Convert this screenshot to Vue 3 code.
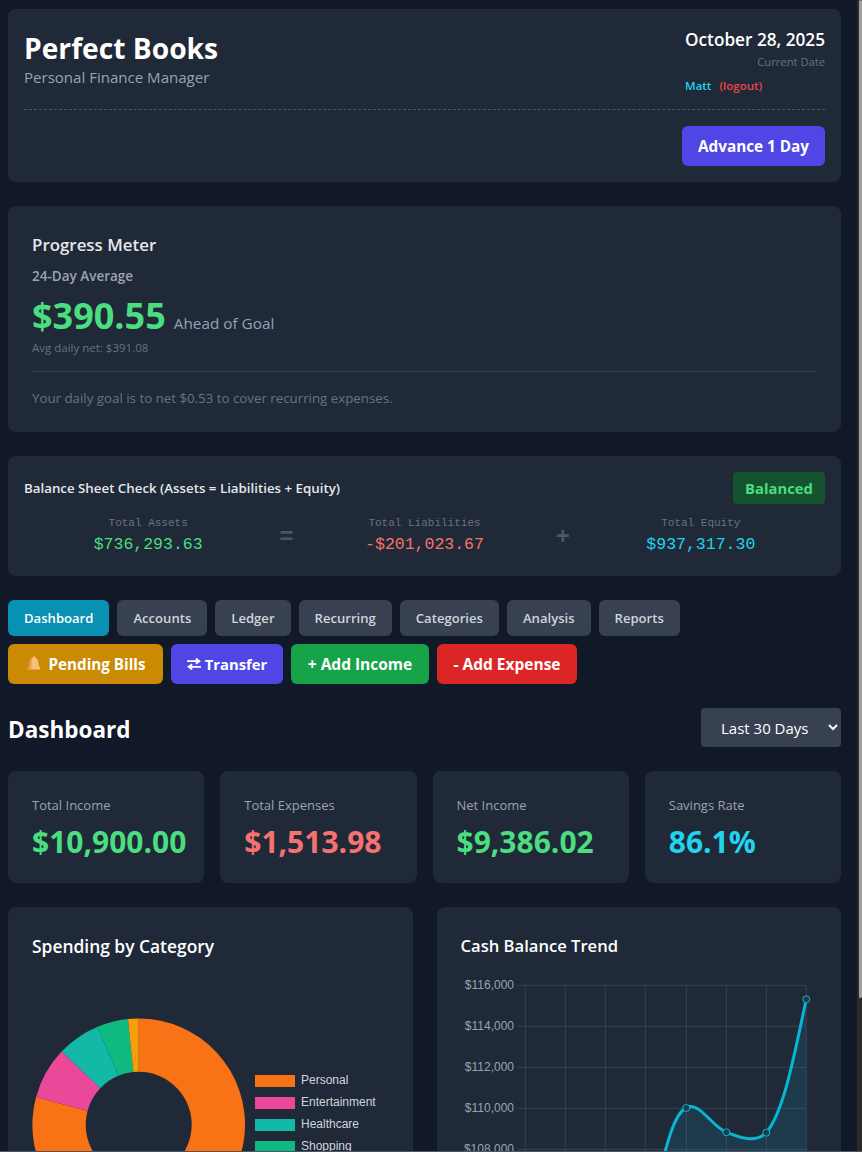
<script setup>
const navTabs = ['Dashboard', 'Accounts', 'Ledger', 'Recurring', 'Categories', 'Analysis', 'Reports'];

const stats = [
  { label: 'Total Income', value: '$10,900.00', color: 'green' },
  { label: 'Total Expenses', value: '$1,513.98', color: 'red' },
  { label: 'Net Income', value: '$9,386.02', color: 'green' },
  { label: 'Savings Rate', value: '86.1%', color: 'cyan' }
];

// donut drawn from the top, clockwise; degrees where each slice ends
const slices = [
  { end: 285.1, color: '#f97316' },
  { end: 313.5, color: '#ec4899' },
  { end: 337.3, color: '#14b8a6' },
  { end: 354.2, color: '#10b981' },
  { end: 360, color: '#f59e0b' }
];

const point = (r, deg) => {
  const a = (deg - 90) * Math.PI / 180;
  return `${(130.7 + r * Math.cos(a)).toFixed(2)} ${(217.7 + r * Math.sin(a)).toFixed(2)}`;
};

const slicePaths = slices.map((s, i) => {
  const start = i ? slices[i - 1].end : 0;
  const big = s.end - start > 180 ? 1 : 0;
  return {
    color: s.color,
    d: `M${point(106.3, start)} A106.3 106.3 0 ${big} 1 ${point(106.3, s.end)} L${point(53, s.end)} A53 53 0 ${big} 0 ${point(53, start)}Z`
  };
});

const legend = [
  { name: 'Personal', color: '#f97316', y: 168 },
  { name: 'Entertainment', color: '#ec4899', y: 190 },
  { name: 'Healthcare', color: '#14b8a6', y: 212 },
  { name: 'Shopping', color: '#10b981', y: 234 }
];

const yTicks = [
  { label: '$116,000', y: 78.3 },
  { label: '$114,000', y: 119.3 },
  { label: '$112,000', y: 160.3 },
  { label: '$110,000', y: 201.3 },
  { label: '$108,000', y: 242.3 }
];
const xGrid = [88.3, 128.3, 168.3, 208.3, 249.3, 289.3, 329.3, 369.3];
const linePoints = [[249.3, 201], [289.3, 225.3], [329.3, 225.7], [369.3, 92.3]];
const linePath = 'M226 252 C233 226 240 201 253 199.5 C265 199 275 219 289.3 225.3 C301 230 318 237 329.3 225.7 C348 203 358 143 369.3 92.3';
</script>

<template>
  <div class="page">
    <header class="card top-card">
      <div class="top-row">
        <div>
          <h1 class="brand">Perfect Books</h1>
          <p class="tagline">Personal Finance Manager</p>
        </div>
        <div class="date-box">
          <div class="date">October 28, 2025</div>
          <div class="date-label">Current Date</div>
          <div class="user"><span class="user-name">Matt</span><span class="logout">(logout)</span></div>
        </div>
      </div>
      <div class="advance-row">
        <button class="advance-btn">Advance 1 Day</button>
      </div>
    </header>

    <section class="card progress-card">
      <h2 class="progress-title">Progress Meter</h2>
      <div class="progress-sub">24-Day Average</div>
      <div class="progress-value-row">
        <span class="progress-value">$390.55</span>
        <span class="progress-state">Ahead of Goal</span>
      </div>
      <div class="progress-avg">Avg daily net: $391.08</div>
      <p class="progress-note">Your daily goal is to net $0.53 to cover recurring expenses.</p>
    </section>

    <section class="card balance-card">
      <div class="balance-head">
        <h3 class="balance-title">Balance Sheet Check (Assets = Liabilities + Equity)</h3>
        <span class="balance-badge">Balanced</span>
      </div>
      <div class="balance-grid">
        <div>
          <div class="balance-label">Total Assets</div>
          <div class="balance-value green">$736,293.63</div>
        </div>
        <div class="balance-op">=</div>
        <div>
          <div class="balance-label">Total Liabilities</div>
          <div class="balance-value red">-$201,023.67</div>
        </div>
        <div class="balance-op">+</div>
        <div>
          <div class="balance-label">Total Equity</div>
          <div class="balance-value cyan">$937,317.30</div>
        </div>
      </div>
    </section>

    <nav class="tabs">
      <button v-for="(tab, i) in navTabs" :key="tab" class="tab" :class="{ active: i === 0 }">{{ tab }}</button>
    </nav>

    <div class="actions">
      <button class="action amber">
        <svg class="bell" viewBox="0 0 16 16" width="16" height="16">
          <path d="M8 .6c-.8 0-1.300.5-1.400 1.200C4.700 2.500 3.900 4.300 3.700 6.400c-.2 2.600-.7 4.300-2 5.700v1.400h12.600v-1.400c-1.300-1.400-1.800-3.100-2-5.700-.2-2.100-1-3.900-2.900-4.600C9.300 1.100 8.800.6 8 .6z" fill="#f6c27a"/>
          <path d="M1.700 12.100c1.300-1.400 1.800-3.100 2-5.700.2-2 .9-3.700 2.700-4.500C5.500 5 5.700 9.500 5.300 13.500H1.700z" fill="#f0975c"/>
          <path d="M6.300 13.800a1.700 1.700 0 0 0 3.400 0z" fill="#e2803f"/>
        </svg>
        <span>Pending Bills</span>
      </button>
      <button class="action indigo">
        <svg viewBox="0 0 14 12" width="14" height="12" fill="none" stroke="#fff" stroke-width="1.800">
          <path d="M0 3.200H12M8.800 .6 12.400 3.200 8.800 5.800" />
          <path d="M14 8.800H2M5.200 6.200 1.600 8.800 5.200 11.400" />
        </svg>
        <span>Transfer</span>
      </button>
      <button class="action green-btn">+ Add Income</button>
      <button class="action red-btn">- Add Expense</button>
    </div>

    <div class="dash-head">
      <h2 class="dash-title">Dashboard</h2>
      <select class="range">
        <option>Last 30 Days</option>
        <option>Last 90 Days</option>
      </select>
    </div>

    <div class="stats">
      <div v-for="s in stats" :key="s.label" class="card stat">
        <div class="stat-label">{{ s.label }}</div>
        <div class="stat-value" :class="s.color">{{ s.value }}</div>
      </div>
    </div>

    <div class="charts">
      <div class="card chart-card">
        <h3 class="chart-title wide-title">Spending by Category</h3>
        <svg class="chart" width="405" height="300" viewBox="0 0 405 300">
          <path v-for="p in slicePaths" :key="p.color" :d="p.d" :fill="p.color" />
          <g v-for="l in legend" :key="l.name">
            <rect x="247" :y="l.y" width="40" height="12" :fill="l.color" />
            <text x="293" :y="l.y + 9" class="legend-text">{{ l.name }}</text>
          </g>
        </svg>
      </div>
      <div class="card chart-card">
        <h3 class="chart-title">Cash Balance Trend</h3>
        <svg class="chart" width="404" height="300" viewBox="0 0 404 300">
          <g stroke="#374151" stroke-width="1">
            <line v-for="x in xGrid" :key="x" :x1="x" :x2="x" y1="78.300" y2="300" />
            <line v-for="t in yTicks" :key="t.label" x1="80.300" x2="369.300" :y1="t.y" :y2="t.y" />
          </g>
          <text v-for="t in yTicks" :key="t.label" x="77" :y="t.y + 4" text-anchor="end" class="tick-text">{{ t.label }}</text>
          <path :d="linePath + ' V300 H226Z'" fill="#06b6d4" fill-opacity="0.12" />
          <path :d="linePath" fill="none" stroke="#06b6d4" stroke-width="3" />
          <circle v-for="p in linePoints" :key="p[0]" :cx="p[0]" :cy="p[1]" r="3.500" fill="#1f3a48" stroke="#06b6d4" stroke-width="1" />
        </svg>
      </div>
    </div>

    <div class="scrollbar"><div class="scroll-thumb"></div></div>
    <div class="bottom-line"></div>
  </div>
</template>

<style>
  html, body {
    background: #111827;
    height: 100%;
    overflow: hidden;
  }
</style>

<style scoped>
  .page {
    box-sizing: border-box;
    color: #fff;
    font-family: "Open Sans", sans-serif;
    height: 1152px;
    overflow: hidden;
    padding: 9px 21px 0 8px;
  }

  .card {
    background: #1f2937;
    border-radius: 8px;
  }

  h1, h2, h3, p {
    margin: 0;
  }

  button {
    border: 0;
    font-family: inherit;
  }

  .green { color: #4ade80; }
  .red { color: #f87171; }
  .cyan { color: #22d3ee; }

  .top-card {
    box-sizing: border-box;
    height: 173px;
    padding: 16px;
  }

  .top-row {
    border-bottom: 1px dashed #4b5563;
    display: flex;
    height: 84px;
    justify-content: space-between;
  }

  .brand {
    font-size: 28.200px;
    font-weight: 700;
    line-height: 36px;
    margin-top: 5px;
  }

  .tagline {
    color: #9ca3af;
    font-size: 15.050px;
    line-height: 22px;
  }

  .date-box {
    text-align: right;
  }

  .date {
    font-size: 17.200px;
    font-weight: 600;
    line-height: 28px;
    margin-top: 1px;
  }

  .date-label {
    color: #6b7280;
    font-size: 11.200px;
    line-height: 16px;
  }

  .user {
    font-size: 11.500px;
    font-weight: 600;
    line-height: 16px;
    margin-top: 8px;
    text-align: left;
  }

  .user-name {
    color: #22d3ee;
    margin-right: 8px;
  }

  .logout {
    color: #ef4444;
  }

  .advance-row {
    display: flex;
    justify-content: flex-end;
    margin-top: 16px;
  }

  .advance-btn {
    background: #4f46e5;
    border-radius: 6px;
    color: #fff;
    font-size: 15.300px;
    font-weight: 700;
    height: 40px;
    width: 143px;
  }

  .progress-card {
    box-sizing: border-box;
    height: 226px;
    margin-top: 24px;
    padding: 24px;
  }

  .progress-title {
    color: #e5e7eb;
    font-size: 16.900px;
    font-weight: 600;
    line-height: 28px;
    margin-top: 1px;
  }

  .progress-sub {
    color: #9ca3af;
    font-size: 13.500px;
    font-weight: 600;
    line-height: 20px;
    margin-top: 7px;
  }

  .progress-value-row {
    align-items: baseline;
    display: flex;
    gap: 8px;
    height: 40px;
    line-height: 40px;
    margin-top: 10px;
  }

  .progress-value {
    color: #4ade80;
    font-size: 36px;
    font-weight: 700;
  }

  .progress-state {
    color: #94a3b8;
    font-size: 15.300px;
    line-height: 20px;
  }

  .progress-avg {
    color: #6b7280;
    font-size: 11.500px;
    line-height: 16px;
    margin-top: 4px;
  }

  .progress-note {
    border-top: 1px solid #374151;
    color: #6b7280;
    font-size: 13.300px;
    line-height: 20px;
    margin-top: 15px;
    padding-top: 16px;
  }

  .balance-card {
    box-sizing: border-box;
    height: 120px;
    margin-top: 24px;
    padding: 16px;
  }

  .balance-head {
    align-items: center;
    display: flex;
    justify-content: space-between;
  }

  .balance-title {
    color: #e5e7eb;
    font-size: 13.300px;
    font-weight: 600;
  }

  .balance-badge {
    background: #14532d;
    border-radius: 4px;
    color: #4ade80;
    font-size: 14.800px;
    font-weight: 700;
    line-height: 33px;
    height: 32px;
    text-align: center;
    width: 92px;
  }

  .balance-grid {
    display: grid;
    font-family: "Liberation Mono", monospace;
    grid-template-columns: minmax(0, 1fr) 28px minmax(0, 1fr) 28px minmax(0, 1fr);
    margin-top: 11px;
    text-align: center;
  }

  .balance-label {
    color: #6b7280;
    font-size: 11px;
    line-height: 16px;
  }

  .balance-value {
    font-size: 16.500px;
    line-height: 28px;
  }

  .balance-op {
    align-self: center;
    color: #4b5563;
    font-size: 24px;
    font-weight: 700;
  }

  .tabs {
    display: flex;
    gap: 8px;
    margin-top: 24px;
  }

  .tab {
    background: #374151;
    border-radius: 6px;
    color: #d1d5db;
    font-size: 13.100px;
    font-weight: 600;
    height: 36px;
    padding: 0 16px;
  }

  .tab.active {
    background: #0891b2;
    color: #fff;
  }

  .actions {
    display: flex;
    gap: 8px;
    margin-top: 8px;
  }

  .action {
    align-items: center;
    border-radius: 6px;
    color: #fff;
    display: flex;
    font-size: 15.500px;
    font-weight: 700;
    gap: 4px;
    height: 40px;
    justify-content: center;
    padding: 0;
  }

  .bell {
    margin-right: 3px;
  }

  .amber { background: #ca8a04; font-size: 15.200px; width: 155px; }
  .indigo { background: #4f46e5; font-size: 14.800px; width: 112px; }
  .green-btn { background: #16a34a; width: 138px; }
  .red-btn { background: #dc2626; width: 140px; }

  .dash-head {
    align-items: center;
    display: flex;
    height: 39px;
    justify-content: space-between;
    margin-top: 24px;
  }

  .dash-title {
    font-size: 22.500px;
    font-weight: 700;
    margin-top: 3px;
  }

  .range {
    background: #374151;
    border: 0;
    border-radius: 4px;
    color: #fff;
    font-family: inherit;
    font-size: 15px;
    height: 39px;
    padding: 0 8px 0 16px;
    width: 140px;
  }

  .stats {
    display: grid;
    gap: 16px;
    grid-template-columns: repeat(4, minmax(0, 1fr));
    margin-top: 24px;
  }

  .stat {
    box-sizing: border-box;
    height: 112px;
    padding: 24px;
  }

  .stat-label {
    color: #9ca3af;
    font-size: 13px;
    line-height: 20px;
  }

  .stat-value {
    font-size: 30px;
    font-weight: 700;
    line-height: 36px;
    margin-top: 9px;
    white-space: nowrap;
  }

  .charts {
    display: grid;
    gap: 24px;
    grid-template-columns: minmax(0, 1fr) minmax(0, 1fr);
    margin-top: 24px;
  }

  .chart-card {
    height: 300px;
    overflow: hidden;
    position: relative;
  }

  .chart-title {
    font-size: 16.600px;
    font-weight: 600;
    left: 24px;
    line-height: 28px;
    position: absolute;
    top: 25px;
  }

  .wide-title {
    font-size: 17.400px;
  }

  .chart {
    display: block;
  }

  .legend-text {
    fill: #d1d5db;
    font-family: "Liberation Sans", sans-serif;
    font-size: 12px;
  }

  .tick-text {
    fill: #9ca3af;
    font-family: "Liberation Sans", sans-serif;
    font-size: 12px;
  }

  .scrollbar {
    background: #2b2b2b;
    bottom: 0;
    position: fixed;
    right: 0;
    top: 0;
    width: 5px;
  }

  .scroll-thumb {
    background: #9f9f9f;
    border-radius: 3px;
    height: 998px;
    margin-left: 2px;
  }

  .bottom-line {
    background: #4b5563;
    bottom: 0;
    height: 1px;
    left: 0;
    position: fixed;
    right: 0;
  }
</style>
